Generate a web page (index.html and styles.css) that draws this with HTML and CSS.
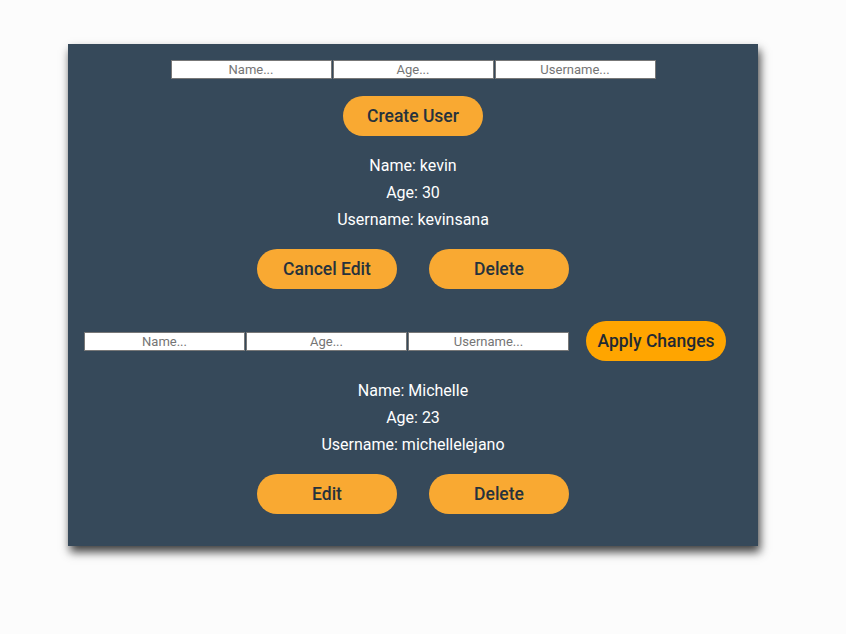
FILE: index.html
```html
<!DOCTYPE html>
<html>
<head>
<meta charset="utf-8">
<link rel="stylesheet" href="styles.css">
</head>
<body>
<div class="panel">
  <div class="inputs">
    <input class="field" placeholder="Name...">
    <input class="field" placeholder="Age...">
    <input class="field" placeholder="Username...">
  </div>
  <button class="btn create">Create User</button>
  <div class="user">
    <p>Name: kevin</p>
    <p>Age: 30</p>
    <p>Username: kevinsana</p>
  </div>
  <div class="actions">
    <button class="btn">Cancel Edit</button>
    <button class="btn">Delete</button>
  </div>
  <div class="edit-row">
    <div class="inputs">
      <input class="field" placeholder="Name...">
      <input class="field" placeholder="Age...">
      <input class="field" placeholder="Username...">
    </div>
    <button class="btn apply">Apply Changes</button>
  </div>
  <div class="user second">
    <p>Name: Michelle</p>
    <p>Age: 23</p>
    <p>Username: michellelejano</p>
  </div>
  <div class="actions">
    <button class="btn">Edit</button>
    <button class="btn">Delete</button>
  </div>
</div>
</body>
</html>
```
FILE: styles.css
```css
html, body {
  margin: 0;
  padding: 0;
  background: #fcfcfc;
}
body {
  font-family: Roboto, "Liberation Sans", sans-serif;
  padding: 44px 0 40px 68px;
  min-height: 100vh;
  box-sizing: border-box;
}
.panel {
  width: 690px;
  height: 502px;
  box-sizing: border-box;
  background: #36495a;
  box-shadow: 2px 6px 9px rgba(0, 0, 0, 0.75);
  display: flex;
  flex-direction: column;
  align-items: center;
  padding-top: 16px;
}
.inputs {
  display: flex;
  gap: 1px;
}
.field {
  width: 161px;
  height: 19px;
  box-sizing: border-box;
  border: 1px solid #777;
  background: #fff;
  margin: 0;
  padding: 0;
  text-align: center;
  font-family: Roboto, "Liberation Sans", sans-serif;
  font-size: 13px;
  color: #333;
}
.field::placeholder {
  color: #757575;
}
.btn {
  width: 140px;
  height: 40px;
  border: none;
  border-radius: 20px;
  background: #f9a932;
  color: #26323d;
  font-family: Roboto, "Liberation Sans", sans-serif;
  font-size: 17.5px;
  font-weight: 500;
  padding: 0;
  margin: 0;
}
.create {
  margin-top: 17px;
}
.user {
  margin-top: 16px;
  color: #fff;
  font-size: 16px;
  text-align: center;
}
.user p {
  margin: 0;
  line-height: 27px;
}
.actions {
  display: flex;
  gap: 32px;
  margin-top: 16px;
}
.edit-row {
  display: flex;
  align-items: center;
  gap: 17px;
  margin-top: 32px;
  margin-right: 16px;
}
.apply {
  background: #ffa500;
  color: #1f2a33;
}
.second {
  margin-top: 16px;
}
```
